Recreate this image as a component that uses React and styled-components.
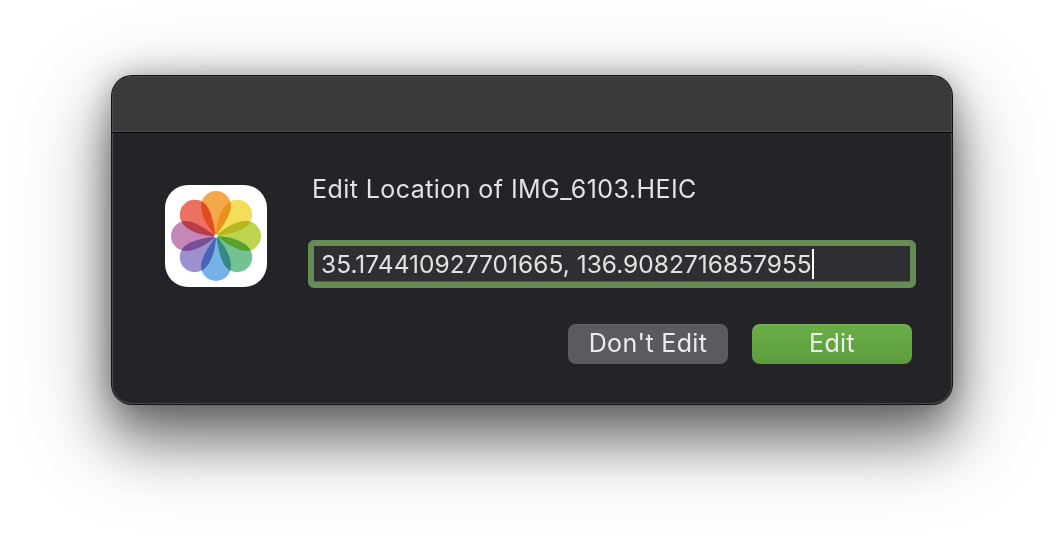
import React from 'react';
import styled, { createGlobalStyle } from 'styled-components';

const GlobalStyle = createGlobalStyle`
    html, body {
        margin: 0;
        padding: 0;
        background: #fff;
    }
`;

const Page = styled.div`
    box-sizing: border-box;
    width: 1064px;
    height: 552px;
    padding: 76px 112px 0;
    overflow: hidden;
    font-family: Inter, 'Noto Sans', sans-serif;
`;

const Dialog = styled.div`
    box-sizing: border-box;
    width: 840px;
    height: 328px;
    border-radius: 20px;
    overflow: hidden;
    background: #242428;
    box-shadow: 0 0 0 1px #111, inset 0 0 0 1px #4a4a4c, 0 0 30px rgba(0, 0, 0, 0.3), 0 35px 50px rgba(0, 0, 0, 0.4),
        0 28px 90px 8px rgba(0, 0, 0, 0.28);
`;

const TitleBar = styled.div`
    height: 56px;
    background: #3a3a3c;
    border-bottom: 1px solid #0c0c0c;
    box-shadow: inset 0 0 0 1px #4a4a4c;
`;

const Body = styled.div`
    display: flex;
    padding: 43px 36px 0 53px;
`;

const AppIcon = styled.svg`
    flex: none;
    width: 102px;
    height: 102px;
    margin-top: 9px;
    margin-right: 41px;
`;

const Main = styled.div`
    flex: 1;
    display: flex;
    flex-direction: column;
`;

const Title = styled.div`
    padding-left: 4px;
    color: #e2e2e2;
    font-size: 25px;
    line-height: 26px;
    letter-spacing: 0.43px;
`;

const Field = styled.div`
    box-sizing: border-box;
    display: flex;
    align-items: center;
    height: 48px;
    margin-top: 38px;
    padding-left: 7px;
    background: #2f2f33;
    border: 6px solid #668c55;
    border-radius: 6px;
    color: #e2e2e2;
    font-size: 24.5px;
    letter-spacing: 0.02px;
    box-shadow: inset 0 -1px 0 #58585c;
`;

const Caret = styled.span`
    display: inline-block;
    width: 2px;
    height: 30px;
    background: #fff;
`;

const Buttons = styled.div`
    display: flex;
    justify-content: flex-end;
    gap: 24px;
    margin-top: 36px;
    padding-right: 4px;
`;

const Button = styled.div`
    box-sizing: border-box;
    width: 160px;
    height: 40px;
    padding-bottom: 2px;
    display: flex;
    align-items: center;
    justify-content: center;
    border-radius: 8px;
    color: #ececec;
    font-size: 25px;
    letter-spacing: 0.35px;
    background: ${(p) => (p.$primary ? 'linear-gradient(#6aae48, #5c9c3d)' : '#5a5a60')};
    box-shadow: inset 0 1px 0 rgba(255, 255, 255, 0.07);
`;

const PETAL = 'M0 0 C-8 -8 -15 -20 -15 -30 A15 15 0 0 1 15 -30 C15 -21 6 -9 0 0 Z';
const petalColors = ['#f5a84a', '#f3dd5a', '#bcd452', '#74c293', '#76b2e6', '#9d90cf', '#c688ba', '#ec7163'];

const App = () => (
    <Page>
        <GlobalStyle />
        <Dialog>
            <TitleBar />
            <Body>
                <AppIcon viewBox="0 0 102 102">
                    <rect width="102" height="102" rx="23" fill="#fff" />
                    <g transform="translate(51 51)" style={{ isolation: 'isolate' }}>
                        {petalColors.map((color, i) => (
                            <path
                                key={color}
                                d={PETAL}
                                fill={color}
                                transform={`rotate(${i * 45})`}
                                style={{ mixBlendMode: 'multiply' }}
                            />
                        ))}
                        <circle r="2" fill="#eee" />
                    </g>
                </AppIcon>
                <Main>
                    <Title>Edit Location of IMG_6103.HEIC</Title>
                    <Field>
                        35.174410927701665, 136.9082716857955
                        <Caret />
                    </Field>
                    <Buttons>
                        <Button>Don't Edit</Button>
                        <Button $primary>Edit</Button>
                    </Buttons>
                </Main>
            </Body>
        </Dialog>
    </Page>
);

export default App;
